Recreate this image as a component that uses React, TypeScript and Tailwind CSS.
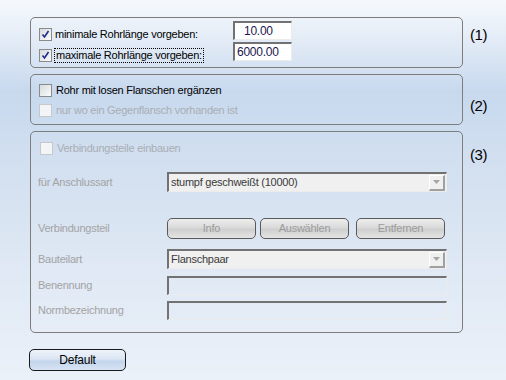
import React from 'react';

type CheckProps = { checked?: boolean; disabled?: boolean };

const Check = ({ checked, disabled }: CheckProps) => (
  <span
    className={`w-[13px] h-[13px] shrink-0 border flex items-center justify-center ${
      disabled
        ? 'border-[#c5c8cc] bg-[#f3f4f5]'
        : 'border-[#8a8b8c] bg-gradient-to-br from-[#d8dadc] to-[#fbfbfb]'
    }`}
  >
    {checked && (
      <svg width="9" height="9" viewBox="0 0 9 9">
        <path d="M1.5 4.5 L3.5 7 L7.5 1" fill="none" stroke="#1f2a8c" strokeWidth="1.6" />
      </svg>
    )}
  </span>
);

const Arrow = () => (
  <span className="w-[16px] h-[16px] shrink-0 flex items-center justify-center bg-[#f0f0f0] border-t border-l border-t-white border-l-white border-b-2 border-r-2 border-b-[#a0a0a0] border-r-[#a0a0a0]">
    <svg width="7" height="4" viewBox="0 0 7 4">
      <path d="M0 0 H7 L3.5 4 Z" fill="#a6a6a6" />
    </svg>
  </span>
);

const sunken =
  'border-t-2 border-l-2 border-t-[#727272] border-l-[#727272] border-b border-r border-b-[#ececec] border-r-[#ececec]';

const Select = ({ value, h }: { value: string; h: string }) => (
  <div className={`w-[280px] ${h} ${sunken} bg-[#f0f0f0] flex items-center justify-between pl-[2px] pr-[1px] text-[#3a3a3a]`}>
    <span>{value}</span>
    <Arrow />
  </div>
);

const GrayButton = ({ label, className }: { label: string; className?: string }) => (
  <div
    className={`w-[89px] h-[21px] rounded-[5px] border border-[#5a5a5a] bg-[linear-gradient(180deg,#ededed_0%,#dadada_45%,#cfcfcf_55%,#e4e4e4_100%)] flex items-center justify-center text-[#9b9b9b] ${className ?? ''}`}
  >
    {label}
  </div>
);

const Label = ({ children }: { children: React.ReactNode }) => (
  <span className="w-[129px] shrink-0 text-[#a3a3a3]">{children}</span>
);

export default function App() {
  return (
    <div className="w-[506px] h-[380px] overflow-hidden bg-[linear-gradient(180deg,#f6f9fc_0%,#dce7f4_14%,#c8d9ee_24%,#d3e0f0_45%,#dfe8f4_70%,#ebf1f9_100%)] font-['Liberation_Sans',Arial,sans-serif] text-[11px] tracking-[-0.25px] text-black leading-none pl-[30px] pt-[17px]">
      {/* (1) */}
      <div className="flex">
        <div className="w-[433px] h-[51px] rounded-[5px] border border-[#7d7d7d] flex">
          <div className="w-[202px] pl-[8px] pt-[6px] flex flex-col">
            <div className="h-[21px] flex items-center gap-[3px]">
              <Check checked />
              <span>minimale Rohrlänge vorgeben:</span>
            </div>
            <div className="h-[21px] flex items-center gap-[2px]">
              <Check checked />
              <span className="border border-dotted border-black px-[1px] py-[1px]">maximale Rohrlänge vorgeben:</span>
            </div>
          </div>
          <div className="pt-[3px] flex flex-col gap-[2px]">
            <div className={`w-[59px] h-[19px] ${sunken} bg-white text-[12px] flex items-center pl-[9px] text-[#1c1650]`}>10.00</div>
            <div className={`w-[59px] h-[19px] ${sunken} bg-white text-[12px] flex items-center pl-[2px] text-[#1c1650]`}>6000.00</div>
          </div>
        </div>
        <span className="ml-[7px] mt-[10px] text-[15px] tracking-[-0.4px]">(1)</span>
      </div>

      {/* (2) */}
      <div className="flex mt-[6px]">
        <div className="w-[433px] h-[51px] rounded-[5px] border border-[#7d7d7d] pl-[8px] pt-[5px] flex flex-col">
          <div className="h-[20px] flex items-center gap-[4px]">
            <Check />
            <span>Rohr mit losen Flanschen ergänzen</span>
          </div>
          <div className="h-[20px] flex items-center gap-[4px]">
            <Check disabled />
            <span className="text-[#a8adb3]">nur wo ein Gegenflansch vorhanden ist</span>
          </div>
        </div>
        <span className="ml-[7px] mt-[24px] text-[15px] tracking-[-0.4px]">(2)</span>
      </div>

      {/* (3) */}
      <div className="flex mt-[6px]">
        <div className="w-[433px] h-[202px] rounded-[5px] border border-[#7d7d7d] pl-[7px] flex flex-col">
          <div className="mt-[10px] ml-[2px] h-[13px] flex items-center gap-[4px]">
            <Check disabled />
            <span className="text-[#a8adb3]">Verbindungsteile einbauen</span>
          </div>
          <div className="mt-[17px] flex items-center">
            <Label>für Anschlussart</Label>
            <Select value="stumpf geschweißt (10000)" h="h-[20px]" />
          </div>
          <div className="mt-[26px] flex items-center">
            <Label>Verbindungsteil</Label>
            <GrayButton label="Info" />
            <GrayButton label="Auswählen" className="ml-[4px]" />
            <GrayButton label="Entfernen" className="ml-[7px]" />
          </div>
          <div className="mt-[10px] flex items-center">
            <Label>Bauteilart</Label>
            <Select value="Flanschpaar" h="h-[20px]" />
          </div>
          <div className="mt-[7px] flex items-center">
            <Label>Benennung</Label>
            <div className={`w-[280px] h-[19px] ${sunken}`} />
          </div>
          <div className="mt-[6px] flex items-center">
            <Label>Normbezeichnung</Label>
            <div className={`w-[280px] h-[19px] ${sunken}`} />
          </div>
        </div>
        <span className="ml-[7px] mt-[16px] text-[15px] tracking-[-0.4px]">(3)</span>
      </div>

      <div className="mt-[16px] -ml-[1px] w-[97px] h-[22px] rounded-[5px] border border-[#1a1a1a] bg-[linear-gradient(180deg,#eef3fa_0%,#dbe6f4_45%,#c3d5ec_55%,#d6e3f3_100%)] flex items-center justify-center text-[12px]">
        Default
      </div>
    </div>
  );
}
